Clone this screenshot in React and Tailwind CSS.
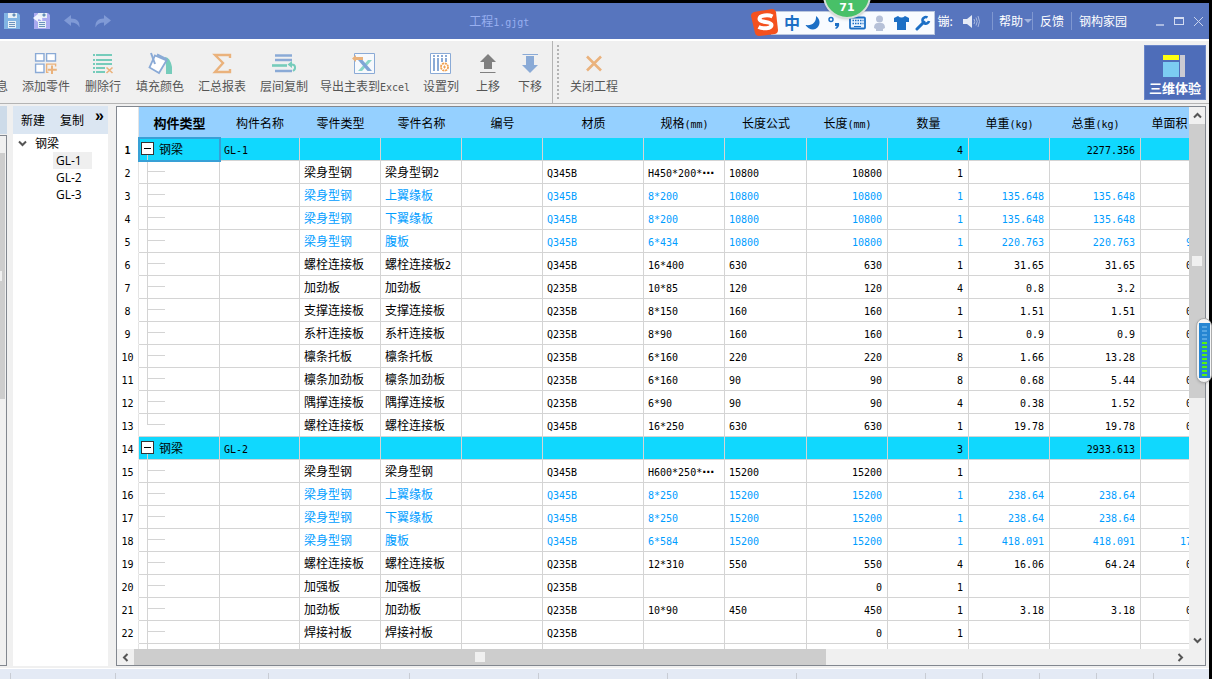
import { Fragment, useState } from 'react';

const columns = [
  { title: '构件类型', width: 81 },
  { title: '构件名称', width: 80 },
  { title: '零件类型', width: 81 },
  { title: '零件名称', width: 81 },
  { title: '编号', width: 81 },
  { title: '材质', width: 101 },
  { title: '规格(mm)', width: 81 },
  { title: '长度公式', width: 82 },
  { title: '长度(mm)', width: 81, right: true },
  { title: '数量', width: 81, right: true },
  { title: '单重(kg)', width: 81, right: true },
  { title: '总重(kg)', width: 91, right: true },
  { title: '单面积(m2)', width: 81, right: true },
];

// kind: g = group, n = normal part, s = sub plate of a section
const rows = [
  ['g', '钢梁', 'GL-1', '', '', '', '', '', '', '', '4', '', '2277.356', ''],
  ['n', '', '', '梁身型钢', '梁身型钢2', '', 'Q345B', 'H450*200*⋯', '10800', '10800', '1', '', '', ''],
  ['s', '', '', '梁身型钢', '上翼缘板', '', 'Q345B', '8*200', '10800', '10800', '1', '135.648', '135.648', ''],
  ['s', '', '', '梁身型钢', '下翼缘板', '', 'Q345B', '8*200', '10800', '10800', '1', '135.648', '135.648', ''],
  ['s', '', '', '梁身型钢', '腹板', '', 'Q345B', '6*434', '10800', '10800', '1', '220.763', '220.763', '9.374'],
  ['n', '', '', '螺栓连接板', '螺栓连接板2', '', 'Q345B', '16*400', '630', '630', '1', '31.65', '31.65', '0.504'],
  ['n', '', '', '加劲板', '加劲板', '', 'Q235B', '10*85', '120', '120', '4', '0.8', '3.2', ''],
  ['n', '', '', '支撑连接板', '支撑连接板', '', 'Q235B', '8*150', '160', '160', '1', '1.51', '1.51', '0.048'],
  ['n', '', '', '系杆连接板', '系杆连接板', '', 'Q235B', '8*90', '160', '160', '1', '0.9', '0.9', '0.029'],
  ['n', '', '', '檩条托板', '檩条托板', '', 'Q235B', '6*160', '220', '220', '8', '1.66', '13.28', ''],
  ['n', '', '', '檩条加劲板', '檩条加劲板', '', 'Q235B', '6*160', '90', '90', '8', '0.68', '5.44', '0.029'],
  ['n', '', '', '隅撑连接板', '隅撑连接板', '', 'Q235B', '6*90', '90', '90', '4', '0.38', '1.52', '0.016'],
  ['n', '', '', '螺栓连接板', '螺栓连接板', '', 'Q345B', '16*250', '630', '630', '1', '19.78', '19.78', '0.315'],
  ['g', '钢梁', 'GL-2', '', '', '', '', '', '', '', '3', '', '2933.613', ''],
  ['n', '', '', '梁身型钢', '梁身型钢', '', 'Q345B', 'H600*250*⋯', '15200', '15200', '1', '', '', ''],
  ['s', '', '', '梁身型钢', '上翼缘板', '', 'Q345B', '8*250', '15200', '15200', '1', '238.64', '238.64', ''],
  ['s', '', '', '梁身型钢', '下翼缘板', '', 'Q345B', '8*250', '15200', '15200', '1', '238.64', '238.64', ''],
  ['s', '', '', '梁身型钢', '腹板', '', 'Q345B', '6*584', '15200', '15200', '1', '418.091', '418.091', '17.754'],
  ['n', '', '', '螺栓连接板', '螺栓连接板', '', 'Q235B', '12*310', '550', '550', '4', '16.06', '64.24', '0.341'],
  ['n', '', '', '加强板', '加强板', '', 'Q235B', '', '', '0', '1', '', '', ''],
  ['n', '', '', '加劲板', '加劲板', '', 'Q235B', '10*90', '450', '450', '1', '3.18', '3.18', '0.081'],
  ['n', '', '', '焊接衬板', '焊接衬板', '', 'Q235B', '', '', '0', '1', '', '', ''],
];

// Latin runs are set at half the width of a Chinese character
function Text({ children }) {
  return children.split(/([\x20-\x7e]+)/).map((run, i) => {
    if (run === '⋯') {
      return <span key={i} className="font-['DejaVu_Sans',sans-serif] font-bold leading-none">⋯</span>;
    }
    return i % 2 ? (
      <span key={i} className="font-['DejaVu_Sans_Mono',monospace] text-[10px] leading-none">{run}</span>
    ) : (
      <Fragment key={i}>{run}</Fragment>
    );
  });
}

function Icon({ children }) {
  return (
    <svg width="24" height="22" viewBox="0 0 24 22" fill="none" className="overflow-visible">
      {children}
    </svg>
  );
}

const icons = {
  add: (
    <Icon>
      <g fill="#fff" stroke="#8aaad6" strokeWidth="1.4">
        <path d="M1.6 1.6h8.4v7.4H1.6zM12.6 1.6h8.9v7.4h-8.9zM1.6 12.1h8.4v8.4H1.6z" />
      </g>
      <path d="M12.6 20.4V12.1h9v2.5M12 20.4h2.5" stroke="#eab27c" strokeWidth="1.4" />
      <path d="M18 13.5v8.5M13.8 17.8h9" stroke="#eab27c" strokeWidth="2" />
    </Icon>
  ),
  remove: (
    <Icon>
      <path d="M2 3h2M5 3h16M2 8h2M5 8h16M2 12h2M5 12h16M2 16h2M5 16h9M2 20h2M5 20h9" stroke="#76ccbb" strokeWidth="2" />
      <path d="M15.5 15.5l6 5.5M21.5 15.5l-6 5.5" stroke="#eab27c" strokeWidth="1.6" />
    </Icon>
  ),
  fill: (
    <Icon>
      <path d="M17 5q5 0 7 10v7h-6V14z" fill="#76ccbb" />
      <path d="M7 3.500l11.500 5L11 21l-9.500-5.500z" fill="#fff" stroke="#8aaad6" strokeWidth="1.800" />
      <path d="M3 1l4 11M9 2.500l10 5" stroke="#8aaad6" strokeWidth="2" />
    </Icon>
  ),
  sum: (
    <Icon>
      <path d="M20 6V3H5l8 8-8 9h15v-3" stroke="#eab27c" strokeWidth="2.400" />
    </Icon>
  ),
  copy: (
    <Icon>
      <path d="M3 3.500h17M3 8h17M3 19h17" stroke="#8aaad6" strokeWidth="2.600" />
      <path d="M0 13.500h15" stroke="#76ccbb" strokeWidth="2.600" />
      <path d="M21 19c3-2 3-7-2-6.500" stroke="#76ccbb" strokeWidth="2" />
      <path d="M15.500 12.500l4.500-3.500v7z" fill="#76ccbb" />
    </Icon>
  ),
  excel: (
    <Icon>
      <path d="M1.500 1.500h20v20h-20z" fill="#f7f9fc" stroke="#8aaad6" />
      <path d="M15 8h4L9 19H5z" fill="#8ad6c8" />
      <path d="M5 8h4.500l9.500 11h-4.500z" fill="#7fa5d6" />
      <path d="M-1 6.500l4-3.500v2h7v3H3v2z" fill="#eab27c" />
    </Icon>
  ),
  cols: (
    <Icon>
      <path d="M1.500 1.500h20v20h-20z" fill="#fff" stroke="#8aaad6" />
      <path d="M5 3v2M9 3v2M13 3v2M17 3v2M5 6v13M9 6v13M13 6v4M17 6v4" stroke="#8aaad6" strokeWidth="2" />
      <circle cx="15.500" cy="15" r="3.600" fill="#fff" stroke="#f0a050" strokeWidth="1.800" strokeDasharray="2.100 .7" />
      <path d="M15.500 13.500v3M14 15h3" stroke="#f0a050" />
    </Icon>
  ),
  up: (
    <Icon>
      <path d="M12 2l8 8h-4v7H8v-7H4z" fill="#808080" />
      <path d="M4 20.500h15.500" stroke="#808080" />
    </Icon>
  ),
  down: (
    <Icon>
      <path d="M12 21l8-8h-4V4H8v9H4z" fill="#8aaad6" />
      <path d="M4.500 2.500H20" stroke="#8aaad6" />
    </Icon>
  ),
  close: (
    <Icon>
      <path d="M5 4.500l14 14M19 4.500l-14 14" stroke="#eab27c" strokeWidth="2.600" />
    </Icon>
  ),
};

function Tool({ icon, label, className }) {
  return (
    <button className={`flex shrink-0 flex-col items-center pt-[11px] text-[#555] ${className}`}>
      {icons[icon]}
      <span className="mt-1 whitespace-nowrap leading-4"><Text>{label}</Text></span>
    </button>
  );
}

function Disk({ body, restore }) {
  return (
    <svg width="17" height="18" viewBox="0 0 17 18" className="overflow-visible">
      <path d="M0 1h14l2 2v14H0z" fill={body} />
      <path d="M4 1h9v5H4zM4 9h8v7H4z" fill="#e8f1f6" />
      <path d="M9 2h2v2H9zM5 10.500h6M5 12.500h6M5 14.500h6" fill="#4b86b0" stroke="#6d93bd" />
      {restore && <path d="M-1 6l5-4v2c4 0 5 2 4 6-1-2-2-3-4-2.500V10z" fill="#f0f4ff" />}
    </svg>
  );
}

function Undo({ flip }) {
  return (
    <svg width="17" height="15" viewBox="0 0 17 15" className={flip ? '-scale-x-100' : ''}>
      <path d="M0 6.500L7 1v3.500c6 0 9 3 8.500 9C14 10 11 8.500 7 8.500V12z" fill="#809ad6" />
    </svg>
  );
}

function Chevron({ className = '' }) {
  return (
    <svg width="9" height="9" viewBox="0 0 9 9" fill="none" className={className}>
      <path d="M1 2.500l3.500 3.500 3.500-3.500" stroke="#555" strokeWidth="2" />
    </svg>
  );
}

function TitleBar() {
  return (
    <header className="flex h-9 shrink-0 items-center bg-[#5775be] text-white">
      <div className="flex items-center gap-[13px] pl-1">
        <button aria-label="保存"><Disk body="#82b5e4" /></button>
        <button aria-label="恢复"><Disk body="#aaaaf0" restore /></button>
        <button aria-label="撤销"><Undo /></button>
        <button aria-label="重做"><Undo flip /></button>
      </div>
      <h1 className="flex-1 pr-[50px] text-center text-[#98aff0]"><Text>工程1.gjgt</Text></h1>
      <div className="flex items-center">
        <span>镚:</span>
        <button aria-label="声音" className="ml-[10px] mr-3">
          <svg width="17" height="13" viewBox="0 0 17 13" fill="none">
            <path d="M0 4h4l5-4v13L4 9H0z" fill="#e5eaf6" />
            <path d="M11 4q1.500 2.500 0 5M13 2.500q2.500 4 0 8M15 1q3 5.500 0 11" stroke="#a9b9e0" />
          </svg>
        </button>
        <button className="flex h-[18px] items-center border-l border-[#7f97d0] pl-1.5">
          帮助<i className="ml-px border-x-[4px] border-t-[4px] border-x-transparent border-t-[#a3b5df]" />
        </button>
        <a href="#feedback" className="h-[18px] border-x border-[#7f97d0] px-[7px] leading-[18px]">反馈</a>
        <a href="#home" className="pl-[7px]">钢构家园</a>
        <button aria-label="最小化" className="ml-[29px] mt-[7px] h-0.5 w-2 bg-[#a9b9e0]" />
        <button aria-label="最大化" className="ml-[10px] h-2 w-[10px] border border-t-2 border-[#d4dcf1]" />
        <button aria-label="关闭" className="ml-[10px] mr-1.5">
          <svg width="9" height="9" viewBox="0 0 9 9"><path d="M0 0l9 9M9 0L0 9" stroke="#c8d3ee" /></svg>
        </button>
      </div>
    </header>
  );
}

function Toolbar() {
  return (
    <div className="flex h-[65px] shrink-0 border-b border-t-2 border-b-[#b4b4b4] border-t-white">
      <span className="w-[15px] shrink-0 pt-[37px] leading-4 text-[#555]"><span className="-ml-1">息</span></span>
      <Tool icon="add" label="添加零件" className="w-[62px]" />
      <Tool icon="remove" label="删除行" className="w-[52px]" />
      <Tool icon="fill" label="填充颜色" className="w-[62px]" />
      <Tool icon="sum" label="汇总报表" className="w-[62px]" />
      <Tool icon="copy" label="层间复制" className="w-[62px]" />
      <Tool icon="excel" label="导出主表到Excel" className="w-[100px]" />
      <Tool icon="cols" label="设置列" className="w-[52px]" />
      <Tool icon="up" label="上移" className="w-[42px]" />
      <Tool icon="down" label="下移" className="w-[42px]" />
      <div className="ml-px border-l border-[#b4b4b4]" />
      <div className="my-1 ml-1 border-l-2 border-dotted border-[#b4b4b4]" />
      <Tool icon="close" label="关闭工程" className="ml-1 w-[62px]" />
      <button className="ml-auto mr-[3px] mt-1 flex h-[55px] w-[62px] flex-col items-center border border-[#6a86c8] bg-[#4e6db9] font-bold text-white">
        <svg width="24" height="24" viewBox="0 0 24 24" className="mt-2">
          <path d="M0 1h16v5H0z" fill="#ffff10" />
          <path d="M0 8h16v15H0z" fill="#7cccf2" />
          <path d="M17 1h5v22h-5z" fill="#cbcbd2" />
        </svg>
        <span className="mt-0.5 text-[13px] leading-4">三维体验</span>
      </button>
    </div>
  );
}

function Tree() {
  return (
    <aside className="ml-1.5 flex w-[95px] shrink-0 flex-col bg-white">
      <div className="flex h-7 shrink-0 items-center gap-[15px] bg-[#dbe6f2] pl-2">
        <button>新建</button>
        <button>复制</button>
        <button className="-ml-1 mb-2 font-['Liberation_Sans',sans-serif] text-[16px] font-bold leading-4">»</button>
      </div>
      <button className="flex h-[18px] items-center gap-1 pl-[5px] text-left">
        <Chevron /><span className="ml-1">钢梁</span>
      </button>
      {['GL-1', 'GL-2', 'GL-3'].map((name, i) => (
        <button
          key={name}
          className={`ml-10 h-[17px] w-[39px] pl-[3px] text-left font-['Open_Sans',sans-serif] leading-[17px] ${i === 0 ? 'bg-[#efefef]' : ''}`}
        >
          {name}
        </button>
      ))}
    </aside>
  );
}

function TreeCell({ row, next, open, onToggle }) {
  if (row[0] === 'g') {
    return (
      <div className="flex h-[22px] items-center pl-0.5">
        <div className="flex h-full w-[13px] shrink-0 flex-col items-center pt-1">
          <button
            onClick={onToggle}
            aria-label="展开或折叠"
            className="flex h-[13px] w-[13px] shrink-0 items-center justify-center border border-[#333] bg-white"
          >
            <i className={`w-[7px] bg-black ${open ? 'h-px' : 'h-[3px]'}`} />
          </button>
          <i className="w-px flex-1 bg-[#d4d4d4]" />
        </div>
        <span className="ml-[5px]">{row[1]}</span>
      </div>
    );
  }
  return (
    <div className="ml-2 h-[22px] w-[18px]">
      <div className="h-[11px] border-b border-l border-[#d4d4d4]" />
      {next !== 'g' && <div className="h-3 border-l border-[#d4d4d4]" />}
    </div>
  );
}

function Grid() {
  const [closed, setClosed] = useState([]);
  let group = -1;

  const toggle = (id) =>
    setClosed(closed.includes(id) ? closed.filter((c) => c !== id) : [...closed, id]);

  return (
    <div className="min-w-0 flex-1 overflow-hidden bg-white">
      <table className="w-[1105px] table-fixed border-separate border-spacing-0">
        <colgroup>
          <col className="w-[22px]" />
          {columns.map((c) => <col key={c.title} style={{ width: c.width }} />)}
        </colgroup>
        <thead>
          <tr className="h-[31px]">
            <th className="border-r border-[#e4e4e4] p-0" />
            {columns.map((c, i) => (
              <th key={c.title} className={`bg-[#95d0ff] p-0 whitespace-nowrap ${i === 0 ? 'text-[13px] font-bold' : 'font-normal'}`}>
                <Text>{c.title}</Text>
              </th>
            ))}
          </tr>
        </thead>
        <tbody>
          {rows.map((row, r) => {
            const isGroup = row[0] === 'g';
            if (isGroup) group = r;
            if (!isGroup && closed.includes(group)) return null;
            const id = group;
            return (
              <tr key={r} className={`h-[23px] ${isGroup ? 'bg-[#10d8fe]' : ''} ${row[0] === 's' ? 'text-[#009dff]' : ''}`}>
                <th className={`border-b border-r border-b-transparent border-r-[#e4e4e4] bg-white p-0 leading-[18px] text-black ${r === 0 ? 'font-bold' : 'font-normal'}`}>
                  <Text>{String(r + 1)}</Text>
                </th>
                {columns.map((c, i) => (
                  <td
                    key={c.title}
                    className={`overflow-hidden whitespace-nowrap border-b border-r border-[#d4d4d4] leading-[18px] ${
                      i === 0 ? 'p-0' : c.right ? 'py-0 pl-1 pr-[5px] text-right' : 'py-0 pl-1 pr-0'
                    } ${r === 0 && i === 0 ? 'outline-2 -outline-offset-1 outline-[#38a0d6]' : ''}`}
                  >
                    {i === 0 ? (
                      <TreeCell row={row} next={rows[r + 1]?.[0]} open={!closed.includes(id)} onToggle={() => toggle(id)} />
                    ) : (
                      <Text>{row[i + 1]}</Text>
                    )}
                  </td>
                ))}
              </tr>
            );
          })}
          <tr className="h-[23px]">
            <th className="border-r border-[#e4e4e4]" />
            {columns.map((c, i) => (
              <td key={c.title} className="border-r border-[#d4d4d4] p-0">
                {i === 0 && <div className="ml-2 h-[23px] border-l border-[#d4d4d4]" />}
              </td>
            ))}
          </tr>
        </tbody>
      </table>
    </div>
  );
}

function Sheet() {
  return (
    <section className="ml-2 flex min-w-0 flex-1 flex-col border border-[#82878f]">
      <div className="flex min-h-0 flex-1">
        <Grid />
        <div className="flex w-4 shrink-0 flex-col items-center bg-[#f0f0f0]">
          <button aria-label="向上" className="flex h-[17px] items-center"><Chevron className="rotate-180" /></button>
          <div className="w-full flex-1">
            <div className="flex h-[54%] items-center justify-center bg-[#cdcdcd]">
              <i className="h-[10px] w-[10px] bg-[#f0f0f0]" />
            </div>
          </div>
          <button aria-label="向下" className="flex h-[17px] items-center"><Chevron /></button>
        </div>
      </div>
      <div className="flex h-4 shrink-0 items-center bg-[#f0f0f0] pr-4">
        <button aria-label="向左" className="flex w-[17px] justify-center"><Chevron className="rotate-90" /></button>
        <div className="h-full flex-1">
          <div className="flex h-full w-2/3 items-center justify-center bg-[#cdcdcd]">
            <i className="h-[10px] w-[10px] bg-[#f0f0f0]" />
          </div>
        </div>
        <button aria-label="向右" className="flex w-[17px] justify-center"><Chevron className="-rotate-90" /></button>
      </div>
    </section>
  );
}

function InputBar() {
  return (
    <div className="absolute left-[751px] top-2 flex items-center">
      <svg width="28" height="29" viewBox="0 0 28 29" fill="none" className="z-10">
        <path d="M3 4L21 1q3 0 4 3l2 18q0 3-3 4L8 28q-3 0-4-3L0 8q0-3 3-4z" fill="#f4511e" />
        <path d="M21.500 8.500c-4-2-13-1.500-13 2.500s12 2 12 6-9 4-13 2" stroke="#fff" strokeWidth="4" />
      </svg>
      <div className="-ml-2 flex h-6 items-center gap-[5px] border border-[#b9c7df] bg-[#f8fbff] pl-3 pr-[3px] text-[#1c6fc5]">
        <button className="pb-0.5 text-[16px] font-bold leading-4">中</button>
        <button aria-label="半角">
          <svg width="17" height="16" viewBox="0 0 17 16"><path d="M11 1c6 4 4 13-3 13.500-3 0-6-2-7.500-4.500 7 1 11-3 10.500-9z" fill="currentColor" /></svg>
        </button>
        <button aria-label="标点">
          <svg width="17" height="16" viewBox="0 0 17 16">
            <circle cx="4" cy="4.500" r="2" fill="none" stroke="currentColor" strokeWidth="1.500" />
            <path d="M8 8h4q1 4-3 6l-1-1q2-1 1.500-2H8z" fill="currentColor" />
          </svg>
        </button>
        <button aria-label="软键盘">
          <svg width="17" height="14" viewBox="0 0 17 14">
            <rect x="1" y="1.500" width="15" height="11" rx="1" fill="#e8f3ff" stroke="currentColor" strokeWidth="1.800" />
            <path d="M3.500 4.500h11M3.500 7.500h11" stroke="currentColor" strokeWidth="1.500" strokeDasharray="1.500 1" />
            <path d="M5 10.500h7" stroke="currentColor" />
          </svg>
        </button>
        <button aria-label="用户" className="text-[#b6c1d8]">
          <svg width="17" height="16" viewBox="0 0 17 16" fill="currentColor">
            <circle cx="8.500" cy="4" r="3.500" /><path d="M3 13q0-5 4-5h3q4 0 4 5l-2 1v2H5v-2z" />
          </svg>
        </button>
        <button aria-label="皮肤">
          <svg width="17" height="16" viewBox="0 0 17 16" fill="currentColor"><path d="M5 1q3.500 3 7 0l4 2v4h-3v8H4V7H1V3z" /></svg>
        </button>
        <button aria-label="工具">
          <svg width="16" height="16" viewBox="0 0 16 16" fill="none">
            <path d="M2 14l7-7" stroke="currentColor" strokeWidth="3" strokeLinecap="round" />
            <path d="M12.500 2.500a3.300 3.300 0 1 0 1.500 3.500" stroke="currentColor" strokeWidth="2.600" />
          </svg>
        </button>
      </div>
    </div>
  );
}

export default function App() {
  return (
    <div className="relative flex h-screen min-h-0 flex-col overflow-hidden bg-black pr-[3px] pt-[3px] font-['Noto_Sans_CJK_SC',sans-serif] text-xs text-black">
      <TitleBar />
      <div className="flex min-h-0 flex-1 flex-col bg-[#f0f0f0]">
        <Toolbar />
        <main className="flex min-h-0 flex-1 pb-0.5 pr-[3px] pt-0.5">
          <div className="flex w-[7px] shrink-0 flex-col">
            <div className="h-7 bg-[#cddbe9]" />
            <div className="mt-px flex-1 border-b border-r border-t border-[#82878f] pr-px pt-[17px]">
              <div className="flex h-[48%] items-center bg-[#cdcdcd]"><i className="h-[10px] w-0.5 bg-[#f0f0f0]" /></div>
            </div>
          </div>
          <Tree />
          <Sheet />
        </main>
        <footer className="flex h-[11px] shrink-0 border-t border-white bg-[#e4eaf5] pt-1">
          {[11, 105, 153, 141, 129, 129, 129, 129, 57, 57, 57, 57].map((w, i) => (
            <span key={i} className="shrink-0 border-r border-[#c8ccd4]" style={{ width: w }} />
          ))}
        </footer>
      </div>
      <InputBar />
      <div className="absolute left-[823px] top-[-29px] z-20 flex h-12 w-12 items-end justify-center rounded-full border-2 border-[#d8dedb] bg-[#48c068] pb-[3px] font-['DejaVu_Sans',sans-serif] text-[11px] font-bold leading-3 text-white shadow">
        71
      </div>
      <div className="absolute right-0 top-[318px] flex h-[65px] w-4 justify-center rounded-full border border-[#aaa] bg-[#f4f4f4] py-1 shadow">
        <div className="flex w-[11px] flex-col items-center justify-center gap-0.5 bg-[#2585d2]">
          {Array.from({ length: 13 }, (_, i) => (
            <i key={i} className={`h-0.5 w-[5px] ${i < 4 ? 'bg-[#55a5e2]' : 'bg-[#55f015]'}`} />
          ))}
        </div>
      </div>
    </div>
  );
}
